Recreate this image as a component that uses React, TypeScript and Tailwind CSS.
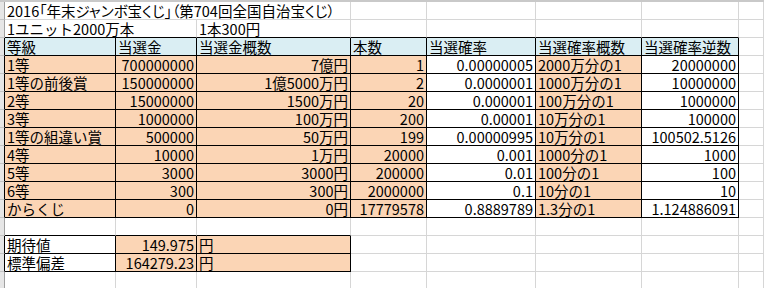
import React from "react";

type Cell = {
  t?: string;
  bg?: string;
  right?: boolean;
  br?: boolean;
  bb?: boolean;
  span?: string;
  palt?: boolean;
};

const ORANGE = "bg-[#fbd5b5]";
const BLUE = "bg-[#daeef3]";

const header = ["等級", "当選金", "当選金概数", "本数", "当選確率", "当選確率概数", "当選確率逆数"];

const data = [
  ["1等", "700000000", "7億円", "1", "0.00000005", "2000万分の1", "20000000"],
  ["1等の前後賞", "150000000", "1億5000万円", "2", "0.0000001", "1000万分の1", "10000000"],
  ["2等", "15000000", "1500万円", "20", "0.000001", "100万分の1", "1000000"],
  ["3等", "1000000", "100万円", "200", "0.00001", "10万分の1", "100000"],
  ["1等の組違い賞", "500000", "50万円", "199", "0.00000995", "10万分の1", "100502.5126"],
  ["4等", "10000", "1万円", "20000", "0.001", "1000分の1", "1000"],
  ["5等", "3000", "3000円", "200000", "0.01", "100分の1", "100"],
  ["6等", "300", "300円", "2000000", "0.1", "10分の1", "10"],
  ["からくじ", "0", "0円", "17779578", "0.8889789", "1.3分の1", "1.124886091"],
];

// white for 当選確率 and 逆数, orange for the rest
const dataBg = [ORANGE, ORANGE, ORANGE, ORANGE, "bg-white", ORANGE, "bg-white"];
const dataRight = [false, true, true, true, true, false, true];

function blank(n: number, bb = false): Cell[] {
  return Array.from({ length: n }, () => ({ bb }));
}

const rows: { strip: boolean; cells: Cell[] }[] = [
  {
    strip: false,
    cells: [
      { t: "2016「年末ジャンボ宝くじ」（第704回全国自治宝くじ）", span: "col-span-3", palt: true },
      ...blank(5),
    ],
  },
  {
    strip: false,
    cells: [
      { t: "1ユニット2000万本", span: "col-span-2", bb: true },
      { t: "1本300円", bb: true },
      ...blank(4, true),
      {},
    ],
  },
  {
    strip: true,
    cells: [...header.map((h) => ({ t: h, bg: BLUE, br: true, bb: true })), {}],
  },
  ...data.map((r) => ({
    strip: true,
    cells: [
      ...r.map((v, i) => ({ t: v, bg: dataBg[i], right: dataRight[i], br: true, bb: true })),
      {},
    ],
  })),
  { strip: false, cells: [...blank(3, true), ...blank(5)] },
  {
    strip: true,
    cells: [
      { t: "期待値", br: true, bb: true },
      { t: "149.975", bg: ORANGE, right: true, br: true, bb: true },
      { t: "円", bg: ORANGE, br: true, bb: true },
      ...blank(5),
    ],
  },
  {
    strip: true,
    cells: [
      { t: "標準偏差", br: true, bb: true },
      { t: "164279.23", bg: ORANGE, right: true, br: true, bb: true },
      { t: "円", bg: ORANGE, br: true, bb: true },
      ...blank(5),
    ],
  },
  { strip: false, cells: blank(8) },
];

export default function App() {
  return (
    <div className="w-[764px] h-[288px] overflow-hidden bg-white text-black text-[14.5px] font-['Noto_Sans_CJK_JP','Noto_Sans_CJK_SC',sans-serif]">
      <div className="h-[2px] bg-[#c9c9c9]" />
      <div className="grid grid-cols-[5px_111px_81px_154px_76px_109px_106px_97px_25px] auto-rows-[18px]">
        {rows.map((row, ri) => (
          <React.Fragment key={ri}>
            <div
              className={`bg-[#e6e6e6] border-b border-r border-b-[#c4c4c4] ${
                row.strip ? "border-r-black" : "border-r-[#a0a0a0]"
              }`}
            />
            {row.cells.map((c, ci) => (
              <div
                key={ci}
                className={`border-r border-b whitespace-nowrap leading-[17px] ${
                  c.bg ?? "bg-white"
                } ${c.span ?? ""} ${c.br ? "border-r-black" : "border-r-[#d6d6d6]"} ${
                  c.bb ? "border-b-black" : "border-b-[#d6d6d6]"
                } ${c.right ? "text-right pr-[2px]" : "text-left pl-[2px]"} ${
                  c.palt ? "[font-feature-settings:'palt']" : ""
                }`}
              >
                {c.t}
              </div>
            ))}
          </React.Fragment>
        ))}
      </div>
    </div>
  );
}
